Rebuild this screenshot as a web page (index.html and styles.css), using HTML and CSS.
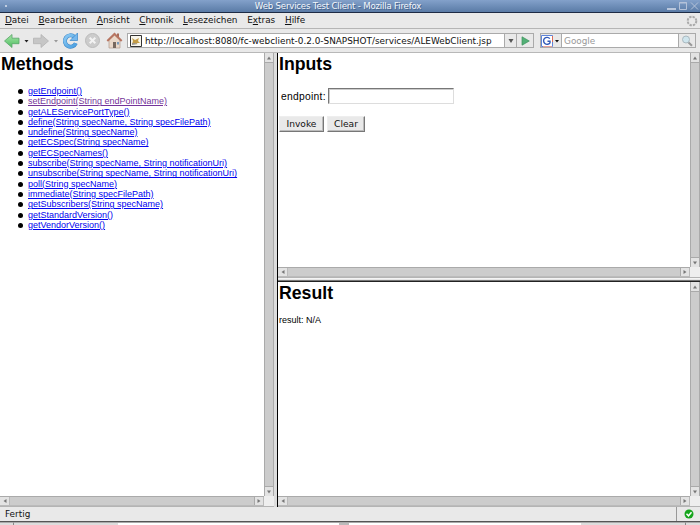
FILE: index.html
```html
<!DOCTYPE html>
<html lang="de">
<head>
<meta charset="utf-8">
<title>Web Services Test Client - Mozilla Firefox</title>
<link rel="stylesheet" href="styles.css">
</head>
<body>
<svg class="defs" width="0" height="0">
  <symbol id="tri" viewBox="0 0 6 6"><path d="M1 4.5 3 1.5 5 4.5Z" fill="#777"/></symbol>
</svg>
<div class="window">
  <header class="titlebar">
    <span class="dot"></span>
    <span class="title">Web Services Test Client - Mozilla Firefox</span>
    <svg class="controls" width="34" height="12" viewBox="0 0 34 12"><path d="M1 9h9" stroke="#c5d0e2" stroke-width="1.8" fill="none"/><path d="M13.5 2.5h7v7h-7zM13 3h8" stroke="#b4c2d9" fill="none"/><path d="M25 2.5l7 7M32 2.5l-7 7" stroke="#b4c2d9" fill="none"/></svg>
  </header>
  <nav class="menubar">
    <span><u>D</u>atei</span><span><u>B</u>earbeiten</span><span><u>A</u>nsicht</span><span><u>C</u>hronik</span><span><u>L</u>esezeichen</span><span>E<u>x</u>tras</span><span><u>H</u>ilfe</span>
    <svg class="throbber" width="12" height="12" viewBox="0 0 12 12"><circle cx="6" cy="6" r="4.3" fill="none" stroke="#aaa" stroke-width="2" stroke-dasharray="2.35 1.03"/></svg>
  </nav>
  <div class="toolbar">
    <svg class="nav-icons" width="127" height="23" viewBox="0 0 127 23">
      <defs>
        <linearGradient id="green" x2="0" y2="1"><stop stop-color="#a5e5a5"/><stop offset="1" stop-color="#4dbd62"/></linearGradient>
        <linearGradient id="blue" x2="1" y2="1"><stop stop-color="#8ccaf4"/><stop offset="1" stop-color="#4a9fe0"/></linearGradient>
      </defs>
      <path d="M4.500 12 12 5.500v3.700h7v5.500h-7v3.800z" fill="url(#green)" stroke="#58a568" stroke-width=".8"/>
      <path d="M24.500 11h4l-2 2.500z" fill="#222"/>
      <path d="M48.500 12 41 5.500v3.700h-7.500v5.500H41v3.800z" fill="#c6c6c6" stroke="#b2b2b2" stroke-width=".8"/>
      <path d="M54 11h4l-2 2.500z" fill="#999"/>
      <path d="M75.800 14.300a5.700 5.700 0 1 1-1.500-6.600" fill="none" stroke="#3a86c8" stroke-width="4"/>
      <path d="M75.800 14.300a5.700 5.700 0 1 1-1.500-6.600" fill="none" stroke="url(#blue)" stroke-width="3"/>
      <path d="M77.500 4v7.500H70z" fill="#75b8ee" stroke="#3a86c8" stroke-width=".7"/>
      <circle cx="92.500" cy="11.500" r="7" fill="#ccc" stroke="#bbb"/>
      <path d="M89.700 8.700l5.600 5.600M95.300 8.700l-5.600 5.600" stroke="#f3f3f3" stroke-width="2"/>
      <path d="M109 11l5.500-5 5.500 5v8h-11z" fill="#ead8c9" stroke="#b39b8c" stroke-width=".7"/>
      <path d="M117 4.500h2V8h-2z" fill="#a66a58"/>
      <path d="M107.300 12l7.200-7 7.200 7" fill="none" stroke="#b77561" stroke-width="2"/>
      <path d="M113 13h3v6h-3z" fill="#77685f"/><path d="M117 13h2v2.500h-2z" fill="#7b9ab8"/>
    </svg>
    <div class="urlbox">
      <svg class="favicon" width="12" height="12" viewBox="0 0 12 12"><path d="M.5.500h11v11H.5z" fill="#f8f6ed" stroke="#333"/><path d="M2 3l3 2 4-2-1 3 2 2-3 0 0 1-3-1-2 1 1-3z" fill="#c49d47"/><path d="M2 8h3l3 1-6 1z" fill="#99948a"/></svg>
      <span class="url">http://localhost:8080/fc-webclient-0.2.0-SNAPSHOT/services/ALEWebClient.jsp</span>
      <span class="drop"><svg width="6" height="4" viewBox="0 0 6 4"><path d="M.5 0h5L3 4z" fill="#555"/></svg></span>
      <span class="go"><svg width="9" height="10" viewBox="0 0 9 10"><path d="M1 .8 8.300 5 1 9.200z" fill="#53b077" stroke="#3d925d" stroke-width=".7"/></svg></span>
    </div>
    <div class="searchbox">
      <span class="engine"><svg width="20" height="12" viewBox="0 0 20 12"><path d="M.5.500h11v11H.5z" fill="#fff" stroke="#5d83d8"/><path d="M11.500 1v6" stroke="#dc6b57"/><path d="M2 11.500h9" stroke="#e7a09a"/><path d="M8.800 3.600A3.500 3.500 0 1 0 9 7.800V6.300H6.500" fill="none" stroke="#3159b8" stroke-width="1.400"/><path d="M14 5h4l-2 2.500z" fill="#111"/></svg></span>
      <span class="placeholder">Google</span>
      <span class="lens"><svg width="12" height="12" viewBox="0 0 12 12"><path d="M7 7l4 3.800" stroke="#999" stroke-width="2"/><circle cx="5" cy="4.500" r="3.500" fill="#cfe5ed" stroke="#aab9c0"/></svg></span>
    </div>
  </div>
  <main class="frames">
    <section class="frame left">
      <div class="page"><h1>Methods</h1>
        <ul>
          <li><a href="#">getEndpoint()</a></li>
          <li><a class="visited" href="#">setEndpoint(String endPointName)</a></li>
          <li><a href="#">getALEServicePortType()</a></li>
          <li><a href="#">define(String specName, String specFilePath)</a></li>
          <li><a href="#">undefine(String specName)</a></li>
          <li><a href="#">getECSpec(String specName)</a></li>
          <li><a href="#">getECSpecNames()</a></li>
          <li><a href="#">subscribe(String specName, String notificationUri)</a></li>
          <li><a href="#">unsubscribe(String specName, String notificationUri)</a></li>
          <li><a href="#">poll(String specName)</a></li>
          <li><a href="#">immediate(String specFilePath)</a></li>
          <li><a href="#">getSubscribers(String specName)</a></li>
          <li><a href="#">getStandardVersion()</a></li>
          <li><a href="#">getVendorVersion()</a></li>
        </ul>
      </div>
      <div class="vbar"><i><svg><use href="#tri"/></svg></i><i class="down"><svg><use href="#tri"/></svg></i></div>
      <div class="hbar"><i class="west"><svg><use href="#tri"/></svg></i><i class="east"><svg><use href="#tri"/></svg></i></div>
      <div class="corner"></div>
    </section>
    <div class="split-v"></div>
    <div class="right">
      <section class="frame">
        <div class="page"><h1>Inputs</h1>
          <form>
            <div class="field"><label for="endpoint">endpoint:</label><input id="endpoint" type="text"></div>
            <div class="buttons"><button type="button">Invoke</button><button type="button" class="clear">Clear</button></div>
          </form>
        </div>
        <div class="vbar"><i><svg><use href="#tri"/></svg></i><i class="down"><svg><use href="#tri"/></svg></i></div>
        <div class="hbar"><i class="west"><svg><use href="#tri"/></svg></i><i class="east"><svg><use href="#tri"/></svg></i></div>
        <div class="corner"></div>
      </section>
      <div class="split-h"></div>
      <section class="frame">
        <div class="page"><h1>Result</h1><p>result: N/A</p></div>
        <div class="vbar"><i><svg><use href="#tri"/></svg></i><i class="down"><svg><use href="#tri"/></svg></i></div>
        <div class="hbar"><i class="west"><svg><use href="#tri"/></svg></i><i class="east"><svg><use href="#tri"/></svg></i></div>
        <div class="corner"></div>
      </section>
    </div>
  </main>
  <footer class="status"><span>Fertig</span><div class="ok"><svg width="10" height="10" viewBox="0 0 10 10"><circle cx="5" cy="5" r="4.500" fill="#16a51d"/><path d="M2.500 4.800l2 2 3-3.500" fill="none" stroke="#fff" stroke-width="1.500"/></svg></div></footer>
  <div class="taskbar"><span class="t1"></span><span class="t2"></span><span class="t3"></span><span class="t4"></span></div>
</div>
</body>
</html>
```
FILE: styles.css
```css
* { box-sizing: border-box; }
body { margin: 0; overflow: hidden; background: #e9e9e9; font-family: "DejaVu Sans", sans-serif; font-size: 8.9px; color: #111; }
.defs { position: absolute; }
svg { display: block; flex: none; }
.window { width: 700px; height: 525px; display: grid; grid-template-rows: 13px 16px 24px 454px 14px 4px; }
.titlebar { display: grid; grid-template-columns: 10px 1fr 34px; align-items: center; background: linear-gradient(#83a1ca, #5a7ba6); border-bottom: 1px solid #1d2b45; color: #f4f7fc; }
.title { text-align: center; line-height: 12px; font-size: 8.6px; letter-spacing: -.19px; white-space: nowrap; text-shadow: 1px 1px 0 #46658f; }
.dot { width: 2px; height: 2px; margin-left: 5px; background: #c0cde1; }
.menubar { display: flex; align-items: center; gap: 9.7px; padding-left: 5px; border-bottom: 1px solid #b5b5b5; line-height: 15px; }
.menubar u { text-underline-offset: 1px; }
.throbber { margin-left: auto; margin-right: 2px; }
.toolbar { display: flex; align-items: center; border-bottom: 1px solid #b8b8b8; }
.urlbox, .searchbox { display: flex; align-items: center; height: 15px; border: 1px solid #aaa; background: #fff; }
.urlbox { width: 407px; }
.favicon { margin-left: 2px; }
.url { flex: 1; margin-left: 3px; white-space: nowrap; }
.drop, .go, .lens, .engine { display: flex; align-items: center; justify-content: center; height: 13px; background: #e9e9e9; border-left: 1px solid #aaa; }
.drop { width: 12px; }
.go { width: 17px; }
.searchbox { width: 156px; margin-left: 6px; }
.engine { width: 21px; border-left: 0; border-right: 1px solid #aaa; }
.placeholder { flex: 1; padding-left: 2px; color: #999; }
.lens { width: 17px; }
.frames { display: grid; grid-template-columns: 274px 4px 422px; background: #fff; }
.frame { display: grid; grid-template-columns: 1fr 10px; grid-template-rows: 1fr 10px; border-bottom: 1px solid #b4b4b4; min-height: 0; }
.right { display: grid; grid-template-rows: 225px 4px 225px; }
.split-v { background: #ddd; border-right: 1px solid #000; }
.split-h { background: #e5e5e5; border-top: 1px solid #f4f4f4; border-bottom: 1px solid #222; box-shadow: inset 0 -1px #777; }
.vbar, .hbar { display: flex; justify-content: space-between; background: #ccc; }
.vbar { flex-direction: column; border-left: 1px solid #aaa; border-right: 1px solid #aaa; }
.hbar { border-top: 1px solid #aaa; border-bottom: 1px solid #bbb; }
.corner { background: #eee; }
.vbar i, .hbar i { display: flex; align-items: center; justify-content: center; background: #e3e3e3; }
.vbar i { height: 10px; border-bottom: 1px solid #aaa; }
.hbar i { width: 10px; border-right: 1px solid #bbb; }
.vbar .down { border-top: 1px solid #aaa; border-bottom: 0; }
.hbar .east { border-left: 1px solid #aaa; }
i svg { width: 6px; height: 6px; }
.down svg { transform: rotate(180deg); }
.west svg { transform: rotate(-90deg); }
.east svg { transform: rotate(90deg); }
.page { font-family: "Liberation Sans", sans-serif; font-size: 9px; color: #000; background: #fff; overflow: hidden; }
h1 { margin: 0 0 0 1px; font-size: 17.7px; line-height: 22px; font-weight: bold; }
ul { margin: 11px 0 0; padding: 0 0 0 28px; list-style: none; }
li { height: 10.3px; line-height: 10.3px; white-space: nowrap; }
li::before { content: ""; float: left; width: 5px; height: 5px; margin: 3px 0 0 -10px; border-radius: 50%; background: #000; }
a { color: #00e; text-decoration: underline; text-underline-offset: 1px; text-decoration-thickness: 1px; }
a.visited { color: #74349a; }
.field { display: flex; align-items: center; margin: 13px 0 0 3px; height: 16px; font-size: 10.3px; letter-spacing: .28px; }
label { width: 47px; }
input { width: 126px; height: 16px; border: 1px solid #ddd; border-top: 1px solid #777; border-left: 1px solid #777; padding: 0; background: #fff; box-shadow: inset 1px 1px #ccc; }
.buttons { display: flex; gap: 3px; margin: 12px 0 0 1px; }
button { width: 45px; height: 16px; padding: 0; border: 1px solid #eee; border-right-color: #777; border-bottom-color: #777; background: #e9e9e9; box-shadow: inset -1px -1px #bbb; font: 9.1px/13px "DejaVu Sans", sans-serif; color: #111; }
button.clear { width: 38px; }
p { margin: 11px 0 0 1px; line-height: 11px; }
.status { display: flex; justify-content: space-between; align-items: center; padding-left: 5px; line-height: 13px; }
.ok { width: 24px; height: 14px; display: flex; align-items: center; justify-content: center; border-left: 1px solid #999; }
.taskbar { display: grid; grid-template-columns: 14px 104px 568px 14px; border-top: 1px solid #555; background: #ddd; }
.t1, .t3 { border-right: 1px solid #888; }
.taskbar span { border-top: 1px solid #aaa; }
.t3 { background: linear-gradient(90deg, #fff 0 221px, #bbb 221px 231px, #fff 231px 463px, #ddd 463px); }
```
